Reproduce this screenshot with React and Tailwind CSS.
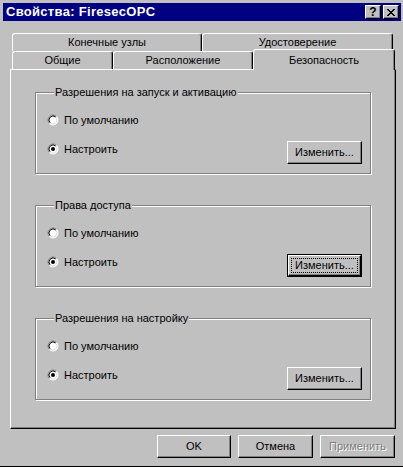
const raised = 'border border-t-white border-l-white border-r-black border-b-black shadow-[inset_-1px_-1px_0_#808080]';

const Radio = ({ checked }) => (
  <svg width="12" height="12" viewBox="0 0 12 12" className="shrink-0">
    <circle cx="6" cy="6" r="5" fill="#fff" />
    <path d="M2.46 9.54 A5 5 0 0 1 9.54 2.46" stroke="#808080" fill="none" />
    <path d="M9.54 2.46 A5 5 0 0 1 2.46 9.54" stroke="#fff" fill="none" />
    <path d="M3.17 8.83 A4 4 0 0 1 8.83 3.17" stroke="#000" fill="none" />
    <path d="M8.83 3.17 A4 4 0 0 1 3.17 8.83" stroke="#dfdfdf" fill="none" />
    {checked && <circle cx="6" cy="6" r="2" fill="#000" />}
  </svg>
);

const RadioRow = ({ label, checked }) => (
  <div className="flex items-center h-[16px] gap-[5px]">
    <Radio checked={checked} />
    <span>{label}</span>
  </div>
);

const ChangeButton = ({ focused }) => {
  if (focused) {
    return (
      <button type="button" className="w-[75px] h-[23px] border border-black p-0 bg-[#c0c0c0]">
        <div className={`h-full w-full ${raised} p-[2px]`}>
          <div className="h-full w-full border border-dotted border-black flex items-center justify-center">
            Изменить...
          </div>
        </div>
      </button>
    );
  }
  return (
    <button type="button" className={`w-[75px] h-[23px] ${raised} bg-[#c0c0c0] flex items-center justify-center`}>
      Изменить...
    </button>
  );
};

const Group = ({ title, focused }) => (
  <fieldset className="h-[88px] border border-[#808080] shadow-[inset_1px_1px_0_#fff,1px_1px_0_#fff] pl-[11px] pr-[8px]">
    <legend className="ml-[7px] px-[1px] leading-[13px] bg-[#c0c0c0]">{title}</legend>
    <div className="pt-[13px]">
      <RadioRow label="По умолчанию" />
      <div className="flex justify-between items-start mt-[13px]">
        <RadioRow label="Настроить" checked />
        <ChangeButton focused={focused} />
      </div>
    </div>
  </fieldset>
);

const Tab = ({ label, w }) => (
  <div className={`${w} h-[18px] border-t border-l border-r border-t-white border-l-white border-r-black shadow-[inset_-1px_0_0_#808080] rounded-t-[3px] flex items-center justify-center`}>
    {label}
  </div>
);

export default function App() {
  return (
    <div className="w-[403px] h-[467px] bg-[#c0c0c0] text-[11px] text-black font-['Liberation_Sans',Arial,sans-serif] pt-[3px] pl-[3px] pr-[2px] border-b border-black flex flex-col">
      {/* title bar */}
      <div className="h-[18px] bg-[#000080] flex items-center justify-between pl-[3px] pr-[2px]">
        <span className="text-white font-bold text-[13px] tracking-[0.3px]">Свойства: FiresecOPC</span>
        <div className="flex gap-[2px]">
          <div className={`w-[16px] h-[14px] ${raised} bg-[#c0c0c0] flex items-center justify-center font-bold text-[12px] leading-none`}>?</div>
          <div className={`w-[16px] h-[14px] ${raised} bg-[#c0c0c0] flex items-center justify-center`}>
            <svg width="8" height="7" viewBox="0 0 8 7">
              <path d="M0 0h2v1h-2zM6 0h2v1h-2zM1 1h2v1h-2zM5 1h2v1h-2zM2 2h4v1h-4zM3 3h2v1h-2zM2 4h4v1h-4zM1 5h2v1h-2zM5 5h2v1h-2zM0 6h2v1h-2zM6 6h2v1h-2z" fill="#000" />
            </svg>
          </div>
        </div>
      </div>

      {/* tabs */}
      <div className="ml-[7px] mt-[12px] w-[386px]">
        <div className="flex ml-[2px]">
          <Tab label="Конечные узлы" w="w-[190px]" />
          <Tab label="Удостоверение" w="w-[191px]" />
        </div>
        <div className="flex items-end h-[18px] ml-[2px]">
          <Tab label="Общие" w="w-[101px]" />
          <Tab label="Расположение" w="w-[140px]" />
          <div className="relative z-10 w-[142px] h-[21px] -mb-px bg-[#c0c0c0] border-t border-l border-r border-t-white border-l-white border-r-black shadow-[inset_-1px_0_0_#808080] rounded-t-[3px] flex justify-center pt-[2px]">
            Безопасность
          </div>
        </div>
        <div className="h-[360px] border border-t-white border-l-white border-r-black border-b-black shadow-[inset_-1px_-1px_0_#808080] px-[24px] pt-[16px] flex flex-col gap-[25px]">
          <Group title="Разрешения на запуск и активацию" />
          <Group title="Права доступа" focused />
          <Group title="Разрешения на настройку" />
        </div>
      </div>

      {/* buttons */}
      <div className="flex justify-end gap-[7px] mt-[6px] mr-[6px]">
        <button type="button" className={`w-[74px] h-[23px] ${raised} bg-[#c0c0c0] flex items-center justify-center`}>OK</button>
        <button type="button" className={`w-[75px] h-[23px] ${raised} bg-[#c0c0c0] flex items-center justify-center`}>Отмена</button>
        <button type="button" disabled className={`w-[75px] h-[23px] ${raised} bg-[#c0c0c0] flex items-center justify-center text-[#808080] [text-shadow:1px_1px_0_#fff]`}>Применить</button>
      </div>
    </div>
  );
}
